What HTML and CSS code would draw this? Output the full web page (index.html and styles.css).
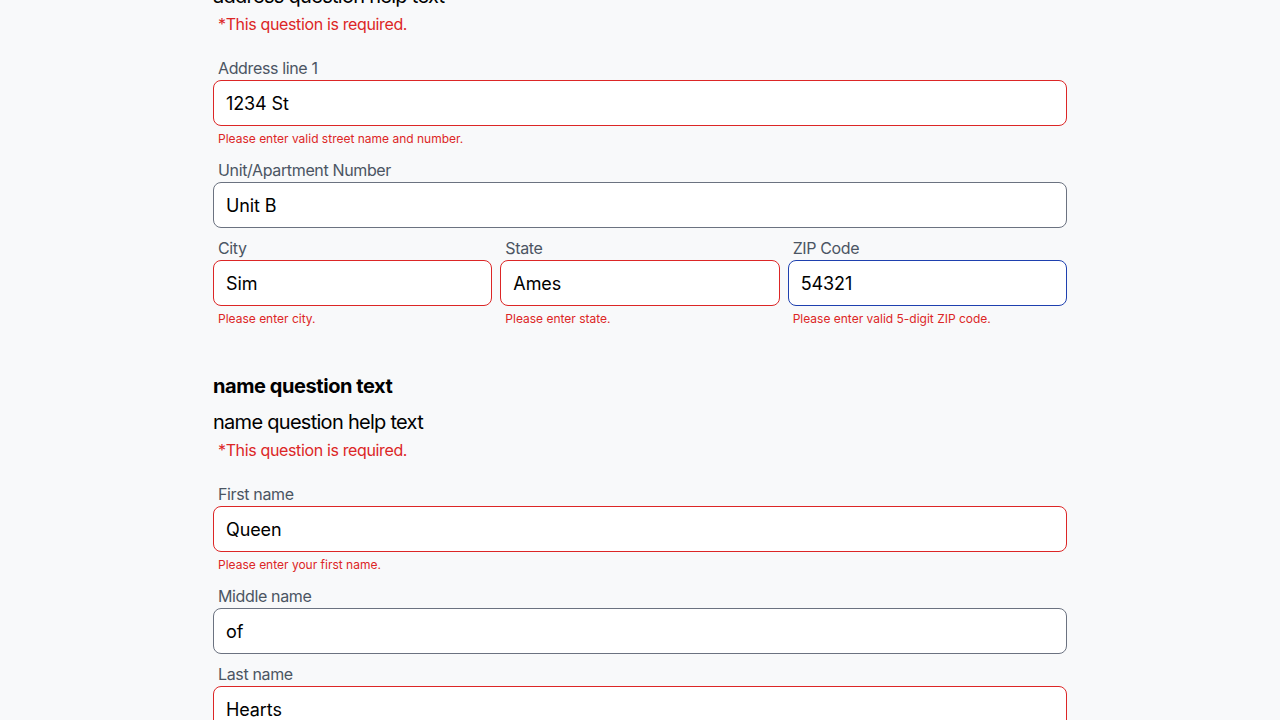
FILE: index.html
```html
<!DOCTYPE html>
<html lang="en">
<head>
<meta charset="utf-8">
<title>Form</title>
<link rel="stylesheet" href="styles.css">
</head>
<body>
<main class="form">
  <section class="question first">
    <p class="help">address question help text</p>
    <p class="required">*This question is required.</p>
    <div class="field">
      <label class="label">Address line 1</label>
      <input class="input invalid" type="text" value="1234 St">
      <p class="error">Please enter valid street name and number.</p>
    </div>
    <div class="field">
      <label class="label">Unit/Apartment Number</label>
      <input class="input" type="text" value="Unit B">
    </div>
    <div class="row">
      <div class="field">
        <label class="label">City</label>
        <input class="input invalid" type="text" value="Sim">
        <p class="error">Please enter city.</p>
      </div>
      <div class="field">
        <label class="label">State</label>
        <input class="input invalid" type="text" value="Ames">
        <p class="error">Please enter state.</p>
      </div>
      <div class="field">
        <label class="label">ZIP Code</label>
        <input class="input focused" type="text" value="54321">
        <p class="error">Please enter valid 5-digit ZIP code.</p>
      </div>
    </div>
  </section>
  <section class="question">
    <h2 class="title">name question text</h2>
    <p class="help">name question help text</p>
    <p class="required">*This question is required.</p>
    <div class="field">
      <label class="label">First name</label>
      <input class="input invalid" type="text" value="Queen">
      <p class="error">Please enter your first name.</p>
    </div>
    <div class="field">
      <label class="label">Middle name</label>
      <input class="input" type="text" value="of">
    </div>
    <div class="field">
      <label class="label">Last name</label>
      <input class="input invalid" type="text" value="Hearts">
    </div>
  </section>
</main>
</body>
</html>
```

FILE: styles.css
```css
html, body {
  margin: 0;
  padding: 0;
  background: #f8f9fa;
  font-family: Inter, "Liberation Sans", sans-serif;
  color: #000;
}

.form {
  width: 854px;
  margin: 0 auto;
}

.question.first {
  margin-top: -18px;
}

.question {
  margin-top: 34px;
}

.title {
  margin: 0;
  font-size: 20px;
  font-weight: 700;
  line-height: 28px;
  letter-spacing: -0.43px;
}

.help {
  margin: 8px 0 0;
  font-size: 20px;
  line-height: 28px;
  letter-spacing: -0.72px;
}

.question.first .help {
  margin-top: 0;
}

.required {
  margin: 2px 0 20px;
  padding-left: 5px;
  font-size: 16px;
  line-height: 24px;
  letter-spacing: -0.36px;
  color: #dc2626;
}

.field {
  display: flex;
  flex-direction: column;
  margin-bottom: 8px;
}

.label {
  padding-left: 5px;
  font-size: 16px;
  line-height: 24px;
  letter-spacing: -0.36px;
  color: #4b5563;
}

.input {
  box-sizing: border-box;
  width: 100%;
  height: 46px;
  margin: 0;
  padding: 0 12px;
  border: 1px solid #6b7280;
  border-radius: 8px;
  background: #fff;
  font-family: inherit;
  font-size: 18px;
  letter-spacing: -0.1px;
  color: #000;
  outline: none;
}

.input.invalid {
  border-color: #dc2626;
}

.input.focused {
  border-color: #1e40af;
}

.error {
  margin: 5px 0 3px;
  padding-left: 5px;
  font-size: 12px;
  line-height: 16px;
  color: #dc2626;
}

.row {
  display: grid;
  grid-template-columns: repeat(3, 1fr);
  column-gap: 8px;
}
```
